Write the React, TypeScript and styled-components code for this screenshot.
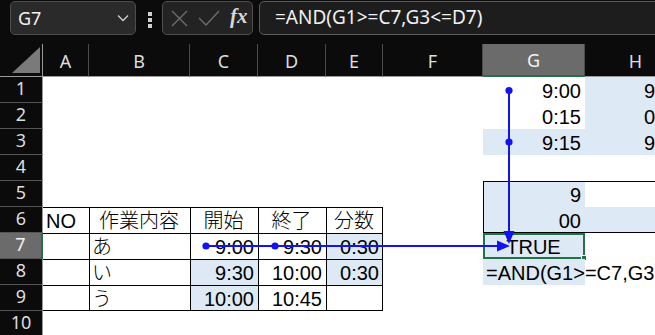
import React from "react";
import styled, { createGlobalStyle, css } from "styled-components";

/**
 * App : Excel シート（トレース矢印つき）
 */

type Align = "left" | "center" | "right";

type CellData = {
  v?: string;
  align?: Align;
  fill?: boolean;
  jp?: boolean;
  bt?: boolean;
  bl?: boolean;
  br?: boolean;
  bb?: boolean;
  selected?: boolean;
  overflow?: boolean;
};

const COLS = ["A", "B", "C", "D", "E", "F", "G", "H"];
const ROWS = [1, 2, 3, 4, 5, 6, 7, 8, 9, 10];
const ACTIVE_COL = "G";
const ACTIVE_ROW = 7;

const cells: Record<string, CellData> = {
  G1: { v: "9:00", align: "right" },
  H1: { v: "9:00", align: "right", fill: true },
  G2: { v: "0:15", align: "right" },
  H2: { v: "0:15", align: "right", fill: true },
  G3: { v: "9:15", align: "right", fill: true },
  H3: { v: "9:15", align: "right", fill: true },
  G5: { v: "9", align: "right", fill: true, bt: true, bl: true },
  H5: { bt: true },
  G6: { v: "00", align: "right", fill: true, bl: true, bb: true },
  H6: { fill: true, bb: true },
  G7: { v: "TRUE", align: "center", fill: true, selected: true },
  G8: { v: "=AND(G1>=C7,G3<=D7)", align: "left", fill: true, overflow: true },
};

// 表 A6:E9
const table: (CellData | null)[][] = [
  [
    { v: "NO", align: "left" },
    { v: "作業内容", align: "center", jp: true },
    { v: "開始", align: "center", jp: true },
    { v: "終了", align: "center", jp: true },
    { v: "分数", align: "center", jp: true },
  ],
  [
    null,
    { v: "あ", align: "left", jp: true },
    { v: "9:00", align: "right" },
    { v: "9:30", align: "right" },
    { v: "0:30", align: "right", fill: true },
  ],
  [
    null,
    { v: "い", align: "left", jp: true },
    { v: "9:30", align: "right", fill: true },
    { v: "10:00", align: "right" },
    { v: "0:30", align: "right", fill: true },
  ],
  [
    null,
    { v: "う", align: "left", jp: true },
    { v: "10:00", align: "right", fill: true },
    { v: "10:45", align: "right" },
    null,
  ],
];

table.forEach((row, ri) => {
  row.forEach((c, ci) => {
    const key = `${COLS[ci]}${ri + 6}`;
    cells[key] = {
      ...(c || {}),
      bt: true,
      bl: ci > 0,
      br: ci === 4,
      bb: ri === 3,
    };
  });
});

const borderShadow = (c: CellData) => {
  const list: string[] = [];
  if (c.bt) list.push("inset 0 1px 0 #000");
  if (c.bl) list.push("inset 1px 0 0 #000");
  if (c.br) list.push("inset -1px 0 0 #000");
  if (c.bb) list.push("inset 0 -1px 0 #000");
  return list.length ? list.join(", ") : "none";
};

const App = () => {
  return (
    <>
      <GlobalStyle />
      <Page>
        <TopBar>
          <NameBox>
            <NameText>G7</NameText>
            <svg width="12" height="8" viewBox="0 0 12 8">
              <polyline
                points="1,1.5 6,6.5 11,1.5"
                fill="none"
                stroke="#d0d0d0"
                strokeWidth="1.3"
              />
            </svg>
          </NameBox>
          <Dots>
            <Dot />
            <Dot />
            <Dot />
          </Dots>
          <FxBox>
            <svg width="17" height="17" viewBox="0 0 17 17">
              <path d="M1 1 L16 16 M16 1 L1 16" stroke="#6d6d6d" strokeWidth="1.4" />
            </svg>
            <svg width="22" height="16" viewBox="0 0 22 16">
              <polyline
                points="1,8 8,15 21,1"
                fill="none"
                stroke="#6d6d6d"
                strokeWidth="1.4"
              />
            </svg>
            <FxText>fx</FxText>
          </FxBox>
          <FormulaBox>=AND(G1&gt;=C7,G3&lt;=D7)</FormulaBox>
        </TopBar>

        <Sheet>
          <Corner>
            <svg width="28" height="26" viewBox="0 0 28 26">
              <polygon points="0,26 28,26 28,0" fill="#7a7a7a" />
            </svg>
          </Corner>
          {COLS.map((c) => (
            <ColHead key={c} $active={c === ACTIVE_COL}>
              {c}
            </ColHead>
          ))}
          {ROWS.map((r) => (
            <React.Fragment key={r}>
              <RowHead $active={r === ACTIVE_ROW}>{r}</RowHead>
              {COLS.map((c) => {
                const d = cells[`${c}${r}`] || {};
                return (
                  <Cell
                    key={c}
                    $align={d.align || "left"}
                    $fill={!!d.fill}
                    $jp={!!d.jp}
                    $overflow={!!d.overflow}
                    style={{ boxShadow: borderShadow(d) }}
                  >
                    {d.v}
                    {d.selected && (
                      <Selection>
                        <FillHandle />
                      </Selection>
                    )}
                  </Cell>
                );
              })}
            </React.Fragment>
          ))}
        </Sheet>

        <Arrows width="655" height="335" viewBox="0 0 655 335">
          <line x1="509" y1="90" x2="509" y2="232" stroke="#1212f2" strokeWidth="2" />
          <polygon points="503.5,231 514.5,231 509,244" fill="#1212f2" />
          <circle cx="509" cy="90.5" r="3.6" fill="#1212f2" />
          <circle cx="509" cy="142" r="3.6" fill="#1212f2" />
          <line x1="206" y1="246" x2="498" y2="246" stroke="#1212f2" strokeWidth="2" />
          <polygon points="497,240.5 497,251.5 510,246" fill="#1212f2" />
          <circle cx="206" cy="246" r="3.6" fill="#1212f2" />
          <circle cx="275" cy="246" r="3.6" fill="#1212f2" />
        </Arrows>
      </Page>
    </>
  );
};

export default App;

const GlobalStyle = createGlobalStyle`
  html, body {
    margin: 0;
    padding: 0;
    background: #fff;
    overflow: hidden;
  }
  * {
    box-sizing: border-box;
  }
`;

const Page = styled.div`
  position: relative;
  width: 655px;
  height: 335px;
  overflow: hidden;
  display: flex;
  flex-direction: column;
  background: #fff;
`;

const TopBar = styled.div`
  flex: none;
  height: 44px;
  background: #0b0b0b;
  display: flex;
  align-items: flex-start;
  padding: 1px 0 0 10px;
`;

const NameBox = styled.div`
  width: 126px;
  height: 34px;
  background: #2a2a2a;
  border: 1px solid #4e4e4e;
  border-radius: 5px;
  display: flex;
  align-items: center;
  justify-content: space-between;
  padding: 0 6px 0 7px;
`;

const NameText = styled.span`
  font-family: "Noto Sans", sans-serif;
  font-size: 18px;
  color: #f2f2f2;
`;

const Dots = styled.div`
  width: 4px;
  margin: 11px 10px 0 12px;
  display: flex;
  flex-direction: column;
  gap: 2px;
`;

const Dot = styled.span`
  width: 4px;
  height: 4px;
  background: #cfcfcf;
`;

const FxBox = styled.div`
  width: 91px;
  height: 34px;
  background: #232323;
  border: 1px solid #4e4e4e;
  border-radius: 5px;
  display: flex;
  align-items: center;
  gap: 10px;
  padding: 0 0 0 8px;
`;

const FxText = styled.span`
  font-family: "Liberation Serif", serif;
  font-style: italic;
  font-weight: bold;
  font-size: 21px;
  color: #d6d6d6;
  margin-top: -3px;
`;

const FormulaBox = styled.div`
  flex: 1;
  margin: 0 -20px 0 6px;
  height: 34px;
  background: #1d1d1d;
  border: 1px solid #5a5a5a;
  border-radius: 5px;
  padding: 0 0 2px 15px;
  display: flex;
  align-items: center;
  font-family: "Noto Sans", sans-serif;
  font-size: 19px;
  color: #f0f0f0;
  white-space: nowrap;
`;

const Sheet = styled.div`
  display: grid;
  grid-template-columns: 43px 46px 101px 68px 68px 57px 100px 102px 102px;
  grid-template-rows: 33px repeat(10, 26px);
`;

const Corner = styled.div`
  background: #0b0b0b;
  border-right: 1px solid #9a9a9a;
  border-bottom: 1px solid #9a9a9a;
  display: flex;
  align-items: flex-end;
  justify-content: flex-end;
  padding: 0 2px 3px 0;
`;

const ColHead = styled.div<{ $active: boolean }>`
  background: #0b0b0b;
  border-right: 1px solid #4c4c4c;
  border-bottom: 1px solid #9a9a9a;
  display: flex;
  align-items: center;
  justify-content: center;
  font-family: "Noto Sans", sans-serif;
  font-size: 18px;
  color: #dedede;
  padding-top: 1px;
  ${({ $active }) =>
    $active &&
    css`
      background: #6b6b6b;
      color: #f4f4f4;
      border-bottom: 2px solid #217346;
    `}
`;

const RowHead = styled.div<{ $active: boolean }>`
  background: #0b0b0b;
  border-right: 1px solid #9a9a9a;
  border-bottom: 1px solid #555;
  display: flex;
  align-items: center;
  justify-content: center;
  padding-bottom: 4px;
  font-family: "Noto Sans", sans-serif;
  font-size: 18px;
  color: #dedede;
  ${({ $active }) =>
    $active &&
    css`
      background: #6b6b6b;
      color: #f4f4f4;
      border-right: 2px solid #217346;
    `}
`;

const Cell = styled.div<{
  $align: Align;
  $fill: boolean;
  $jp: boolean;
  $overflow: boolean;
}>`
  position: relative;
  display: flex;
  align-items: flex-end;
  justify-content: ${({ $align }) =>
    $align === "left" ? "flex-start" : $align === "right" ? "flex-end" : "center"};
  padding: 0 4px 1px 3px;
  background: ${({ $fill }) => ($fill ? "#dde9f5" : "transparent")};
  font-family: "Liberation Sans", "Noto Sans CJK JP", sans-serif;
  font-size: ${({ $jp }) => ($jp ? "20px" : "20px")};
  font-weight: ${({ $jp }) => ($jp ? 300 : 400)};
  line-height: 22px;
  color: #000;
  white-space: nowrap;
  ${({ $overflow }) =>
    $overflow &&
    css`
      overflow: visible;
      z-index: 1;
    `}
`;

const Selection = styled.div`
  position: absolute;
  inset: 0;
  border: 2px solid #217346;
  pointer-events: none;
`;

const FillHandle = styled.span`
  position: absolute;
  right: -4px;
  bottom: -4px;
  width: 6px;
  height: 6px;
  background: #217346;
  border: 1px solid #fff;
`;

const Arrows = styled.svg`
  position: absolute;
  top: 0;
  left: 0;
  pointer-events: none;
  z-index: 2;
`;
